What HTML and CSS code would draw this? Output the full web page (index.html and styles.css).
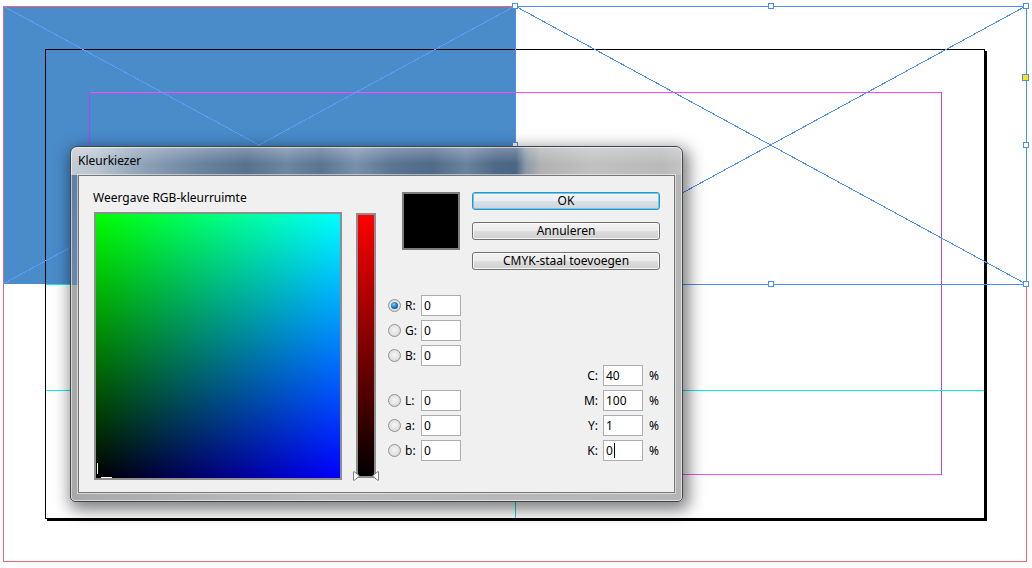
FILE: index.html
```html
<!DOCTYPE html>
<html lang="nl">
<head>
<meta charset="utf-8">
<title>Kleurkiezer</title>
<link rel="stylesheet" href="styles.css">
</head>
<body>
<div class="stage">
  <svg class="canvas" width="1032" height="568" viewBox="0 0 1032 568" shape-rendering="crispEdges">
    <rect x="47" y="51" width="940" height="470" fill="#000"/>
    <rect x="45" y="49" width="940" height="470" fill="#fff"/>
    <rect x="3" y="6" width="512" height="278" fill="#4a8bca"/>
    <rect x="45.5" y="49.5" width="939" height="469" fill="none" stroke="#000"/>
    <line x1="89" y1="92.5" x2="942" y2="92.5" stroke="#ff48ff"/>
    <line x1="89" y1="474.5" x2="942" y2="474.5" stroke="#e858f0"/>
    <line x1="89.5" y1="92" x2="89.5" y2="475" stroke="#a848f8"/>
    <line x1="941.5" y1="92" x2="941.5" y2="475" stroke="#a848f8"/>
    <line x1="46" y1="390.5" x2="984" y2="390.5" stroke="#00f0f0"/>
    <line x1="46" y1="284.5" x2="984" y2="284.5" stroke="#00f0f0"/>
    <line x1="515.5" y1="50" x2="515.5" y2="518" stroke="#00e0e0"/>
    <rect x="3.5" y="6.5" width="1023" height="555" fill="none" stroke="#ec6674"/>
    <g stroke="#5d9cf2" fill="none">
      <line x1="3" y1="6" x2="515" y2="284"/>
      <line x1="515" y1="6" x2="3" y2="284"/>
    </g>
    <g stroke="#4a8ff0" fill="none">
      <rect x="515.5" y="6.5" width="511" height="278"/>
      <line x1="515" y1="6" x2="1026" y2="284"/>
      <line x1="1026" y1="6" x2="515" y2="284"/>
    </g>
    <g stroke="#4a8ff0" fill="#fff">
      <rect x="512.5" y="3.5" width="5" height="5"/>
      <rect x="768.5" y="3.5" width="5" height="5"/>
      <rect x="1023.5" y="3.5" width="5" height="5"/>
      <rect x="1023.5" y="142.5" width="5" height="5"/>
      <rect x="1023.5" y="281.5" width="5" height="5"/>
      <rect x="768.5" y="281.5" width="5" height="5"/>
      <rect x="512.5" y="281.5" width="5" height="5"/>
      <rect x="512.5" y="142.5" width="5" height="5"/>
      <rect x="1022.5" y="74.5" width="6" height="6" fill="#ffe600"/>
    </g>
  </svg>

  <div class="dialog">
    <div class="titlebar">Kleurkiezer</div>
    <div class="client">
      <div class="pickcol">
        <div class="label">Weergave RGB-kleurruimte</div>
        <div class="field">
          <span class="mark mark-v"></span>
          <span class="mark mark-h"></span>
        </div>
      </div>
      <div class="slider">
        <svg class="knob knob-l" width="7" height="10" viewBox="0 0 7 10"><path d="M0.5 1 Q0.5 0.3 1.3 0.8 L6 4.4 Q6.6 5 6 5.6 L1.3 9.2 Q0.5 9.7 0.5 9 Z" fill="#fff" stroke="#7a7a7a"/></svg>
        <svg class="knob knob-r" width="7" height="10" viewBox="0 0 7 10"><path d="M6.5 1 Q6.5 0.3 5.7 0.8 L1 4.4 Q0.4 5 1 5.6 L5.7 9.2 Q6.5 9.7 6.5 9 Z" fill="#fff" stroke="#7a7a7a"/></svg>
      </div>
      <div class="side">
        <div class="top">
          <div class="swatch"></div>
          <div class="buttons">
            <div class="btn btn-default">OK</div>
            <div class="btn">Annuleren</div>
            <div class="btn">CMYK-staal toevoegen</div>
          </div>
        </div>
        <div class="bottom">
          <div class="radios">
            <div class="row"><span class="radio on"></span><span class="rlabel">R:</span><span class="input">0</span></div>
            <div class="row"><span class="radio"></span><span class="rlabel">G:</span><span class="input">0</span></div>
            <div class="row"><span class="radio"></span><span class="rlabel">B:</span><span class="input">0</span></div>
            <div class="row gap"><span class="radio"></span><span class="rlabel">L:</span><span class="input">0</span></div>
            <div class="row"><span class="radio"></span><span class="rlabel">a:</span><span class="input">0</span></div>
            <div class="row"><span class="radio"></span><span class="rlabel">b:</span><span class="input">0</span></div>
          </div>
          <div class="cmyk">
            <div class="row"><span class="clabel">C:</span><span class="input">40</span><span class="pct">%</span></div>
            <div class="row"><span class="clabel">M:</span><span class="input">100</span><span class="pct">%</span></div>
            <div class="row"><span class="clabel">Y:</span><span class="input">1</span><span class="pct">%</span></div>
            <div class="row"><span class="clabel">K:</span><span class="input">0<span class="caret"></span></span><span class="pct">%</span></div>
          </div>
        </div>
      </div>
    </div>
  </div>
</div>
</body>
</html>
```

FILE: styles.css
```css
html, body {
  margin: 0;
  padding: 0;
  background: #fff;
}

body {
  font-family: "Noto Sans", "Open Sans", sans-serif;
  font-size: 12px;
  color: #000;
}

.stage {
  position: relative;
  width: 1032px;
  height: 568px;
  overflow: hidden;
}

.canvas {
  position: absolute;
  left: 0;
  top: 0;
  display: block;
}

/* Dialog window */
.dialog {
  position: absolute;
  left: 70px;
  top: 146px;
  width: 613px;
  height: 356px;
  box-sizing: border-box;
  border: 1px solid #3f454d;
  border-radius: 7px 7px 5px 5px;
  padding: 0 7px 8px;
  display: flex;
  flex-direction: column;
  background:
    linear-gradient(to bottom, rgba(255,255,255,0.28), rgba(255,255,255,0) 60%) no-repeat 0 0 / 100% 28px,
    linear-gradient(to right,
      #c3cbd4 0px, #b9c5d1 25px, #97aabd 60px, #7f95ad 95px, #6a839e 130px,
      #57718f 175px, #6d86a1 215px, #5a7492 250px, #7890aa 285px, #5c7594 320px,
      #4f6a8a 360px, #6a829d 395px, #4d6888 425px, #4a6585 445px, #8e9aa6 455px,
      #b2b2b2 470px, #c1c1c1 520px, #bababa 590px, #c4c4c4 613px) no-repeat 0 0 / 100% 28px,
    linear-gradient(#5f7fa4, #6b88aa) no-repeat 0 28px / 8px 110px,
    linear-gradient(to right, #a9a9a9, #bdbdbd 40%, #b5b5b5);
  box-shadow:
    3px 5px 16px 3px rgba(0, 0, 0, 0.5),
    inset 0 0 0 1px rgba(255, 255, 255, 0.55);
}

.titlebar {
  height: 28px;
  line-height: 28px;
  font-size: 12px;
  color: #000;
  white-space: nowrap;
}

.client {
  flex: 1;
  box-sizing: border-box;
  border: 1px solid #767676;
  background: #f0f0f0;
  display: flex;
  align-items: flex-start;
  padding: 14px 0 0 0;
  box-shadow: 0 0 0 1px rgba(255, 255, 255, 0.5);
}

/* Left column: colour field */
.pickcol {
  margin-left: 15px;
  display: flex;
  flex-direction: column;
}

.label {
  height: 16px;
  line-height: 16px;
  margin-left: -1px;
  white-space: nowrap;
}

.field {
  position: relative;
  margin-top: 6px;
  width: 248px;
  height: 268px;
  box-sizing: border-box;
  border: 2px solid #8e8e8e;
  background:
    linear-gradient(to bottom, #00ff00, #000000),
    linear-gradient(to right, #000000, #0000ff);
  background-blend-mode: screen;
}

.mark {
  position: absolute;
  background: #fff;
}

.mark-v {
  left: 1px;
  top: 249px;
  width: 1px;
  height: 11px;
}

.mark-h {
  left: 5px;
  top: 263px;
  width: 11px;
  height: 1px;
}

/* Vertical slider */
.slider {
  position: relative;
  margin-left: 14px;
  margin-top: 23px;
  width: 20px;
  height: 265px;
  box-sizing: border-box;
  border: 2px solid #8e8e8e;
  background: linear-gradient(to bottom, #ff0000, #000000);
}

.knob {
  position: absolute;
  bottom: -5px;
  display: block;
}

.knob-l { left: -5px; }
.knob-r { right: -5px; }

/* Right side */
.side {
  margin-left: 12px;
  margin-top: 2px;
  width: 272px;
  display: flex;
  flex-direction: column;
}

.top {
  display: flex;
  align-items: flex-start;
}

.swatch {
  margin-left: 14px;
  width: 58px;
  height: 58px;
  box-sizing: border-box;
  border: 2px solid #7d7d7d;
  background: #000;
}

.buttons {
  margin-left: 12px;
  width: 188px;
  display: flex;
  flex-direction: column;
  gap: 12px;
}

.btn {
  height: 18px;
  box-sizing: border-box;
  border: 1px solid #707070;
  border-radius: 3px;
  background: linear-gradient(to bottom, #f3f3f3 0%, #ebebeb 48%, #dddddd 52%, #cfcfcf 100%);
  box-shadow: inset 0 0 0 1px rgba(252, 252, 252, 0.85);
  text-align: center;
  line-height: 16px;
  font-size: 12px;
  white-space: nowrap;
}

.btn-default {
  border-color: #3c8cc4;
  background: linear-gradient(to bottom, #f2f6f8 0%, #e8eef2 48%, #d9e1e6 52%, #cdd6dc 100%);
  box-shadow: inset 0 0 0 1px #5fd0f4;
}

.bottom {
  margin-top: 25px;
  display: flex;
  justify-content: space-between;
  align-items: flex-end;
}

.radios,
.cmyk {
  display: flex;
  flex-direction: column;
  gap: 4px;
}

.row {
  display: flex;
  align-items: center;
  height: 21px;
}

.radios .row.gap {
  margin-top: 20px;
}

.radio {
  width: 13px;
  height: 13px;
  box-sizing: border-box;
  border-radius: 50%;
  border: 1px solid #8f9092;
  background: radial-gradient(circle at 50% 45%, #f6f6f6 0%, #e6e6e6 45%, #cfcfcf 100%);
  position: relative;
}

.radio.on::after {
  content: "";
  position: absolute;
  left: 2px;
  top: 2px;
  width: 7px;
  height: 7px;
  border-radius: 50%;
  background: radial-gradient(circle at 40% 35%, #8fd3ff 0%, #2a8fd6 35%, #0d4a80 80%, #0a3a66 100%);
}

.rlabel {
  width: 16px;
  margin-left: 4px;
  line-height: 21px;
}

.input {
  position: relative;
  width: 40px;
  height: 21px;
  box-sizing: border-box;
  border: 1px solid #abadb3;
  background: #fff;
  padding-left: 2px;
  line-height: 19px;
  font-size: 12px;
  display: flex;
  align-items: center;
}

.caret {
  display: inline-block;
  width: 1px;
  height: 15px;
  background: #000;
  margin-left: 1px;
}

.clabel {
  line-height: 21px;
  text-align: right;
  width: 24px;
  margin-right: 5px;
}

.pct {
  margin-left: 6px;
  width: 11px;
  line-height: 21px;
}
```
